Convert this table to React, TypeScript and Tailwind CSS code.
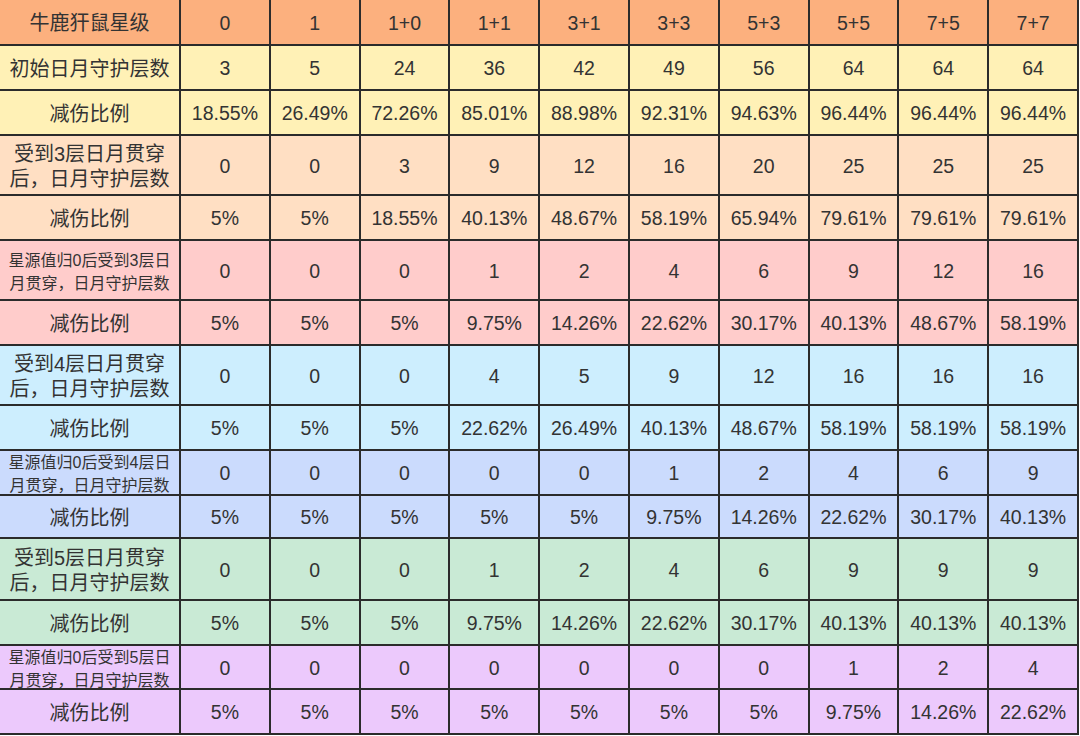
import React from 'react';

interface Row {
  label: string[]; // lines of the first cell
  small?: boolean;
  values: string[];
  bg: string;
}

const rows: Row[] = [
  { label: ['牛鹿犴鼠星级'], values: ['0', '1', '1+0', '1+1', '3+1', '3+3', '5+3', '5+5', '7+5', '7+7'], bg: 'bg-[#fcb07e]' },
  { label: ['初始日月守护层数'], values: ['3', '5', '24', '36', '42', '49', '56', '64', '64', '64'], bg: 'bg-[#fff1b6]' },
  { label: ['减伤比例'], values: ['18.55%', '26.49%', '72.26%', '85.01%', '88.98%', '92.31%', '94.63%', '96.44%', '96.44%', '96.44%'], bg: 'bg-[#fff1b6]' },
  { label: ['受到3层日月贯穿', '后，日月守护层数'], values: ['0', '0', '3', '9', '12', '16', '20', '25', '25', '25'], bg: 'bg-[#ffdfc3]' },
  { label: ['减伤比例'], values: ['5%', '5%', '18.55%', '40.13%', '48.67%', '58.19%', '65.94%', '79.61%', '79.61%', '79.61%'], bg: 'bg-[#ffdfc3]' },
  { label: ['星源值归0后受到3层日', '月贯穿，日月守护层数'], small: true, values: ['0', '0', '0', '1', '2', '4', '6', '9', '12', '16'], bg: 'bg-[#ffcccb]' },
  { label: ['减伤比例'], values: ['5%', '5%', '5%', '9.75%', '14.26%', '22.62%', '30.17%', '40.13%', '48.67%', '58.19%'], bg: 'bg-[#ffcccb]' },
  { label: ['受到4层日月贯穿', '后，日月守护层数'], values: ['0', '0', '0', '4', '5', '9', '12', '16', '16', '16'], bg: 'bg-[#cdeefe]' },
  { label: ['减伤比例'], values: ['5%', '5%', '5%', '22.62%', '26.49%', '40.13%', '48.67%', '58.19%', '58.19%', '58.19%'], bg: 'bg-[#cdeefe]' },
  { label: ['星源值归0后受到4层日', '月贯穿，日月守护层数'], small: true, values: ['0', '0', '0', '0', '0', '1', '2', '4', '6', '9'], bg: 'bg-[#cbdbfd]' },
  { label: ['减伤比例'], values: ['5%', '5%', '5%', '5%', '5%', '9.75%', '14.26%', '22.62%', '30.17%', '40.13%'], bg: 'bg-[#cbdbfd]' },
  { label: ['受到5层日月贯穿', '后，日月守护层数'], values: ['0', '0', '0', '1', '2', '4', '6', '9', '9', '9'], bg: 'bg-[#c9ead5]' },
  { label: ['减伤比例'], values: ['5%', '5%', '5%', '9.75%', '14.26%', '22.62%', '30.17%', '40.13%', '40.13%', '40.13%'], bg: 'bg-[#c9ead5]' },
  { label: ['星源值归0后受到5层日', '月贯穿，日月守护层数'], small: true, values: ['0', '0', '0', '0', '0', '0', '0', '1', '2', '4'], bg: 'bg-[#ecc9fc]' },
  { label: ['减伤比例'], values: ['5%', '5%', '5%', '5%', '5%', '5%', '5%', '9.75%', '14.26%', '22.62%'], bg: 'bg-[#ecc9fc]' },
];

const App: React.FC = () => {
  return (
    <div
      className="w-[1080px] h-[736px] bg-white overflow-hidden text-[#333]"
      style={{ fontFamily: '"Liberation Sans", "Noto Sans CJK SC", sans-serif' }}
    >
      {/* grid lines come from the dark background showing through the gaps */}
      <div className="w-[1079px] bg-[#2b2b2b] pr-[2px] pb-[2px] grid grid-cols-[179px_repeat(10,1fr)] grid-rows-[44px_43px_43px_58px_43px_58px_43px_58px_43px_43px_41px_60px_43px_42px_43px] gap-[2px]">
        {rows.map((row, i) => (
          <React.Fragment key={i}>
            <div
              className={`${row.bg} flex flex-col items-center justify-center text-center pt-[3px] ${
                row.small ? 'text-[16px] leading-[23px]' : 'text-[20px] leading-[25px]'
              }`}
            >
              {row.label.map((line, j) => (
                <span key={j} className="whitespace-nowrap">
                  {line}
                </span>
              ))}
            </div>
            {row.values.map((v, j) => (
              <div key={j} className={`${row.bg} flex items-center justify-center pt-[3px] text-[19.5px]`}>
                {v}
              </div>
            ))}
          </React.Fragment>
        ))}
      </div>
    </div>
  );
};

export default App;
